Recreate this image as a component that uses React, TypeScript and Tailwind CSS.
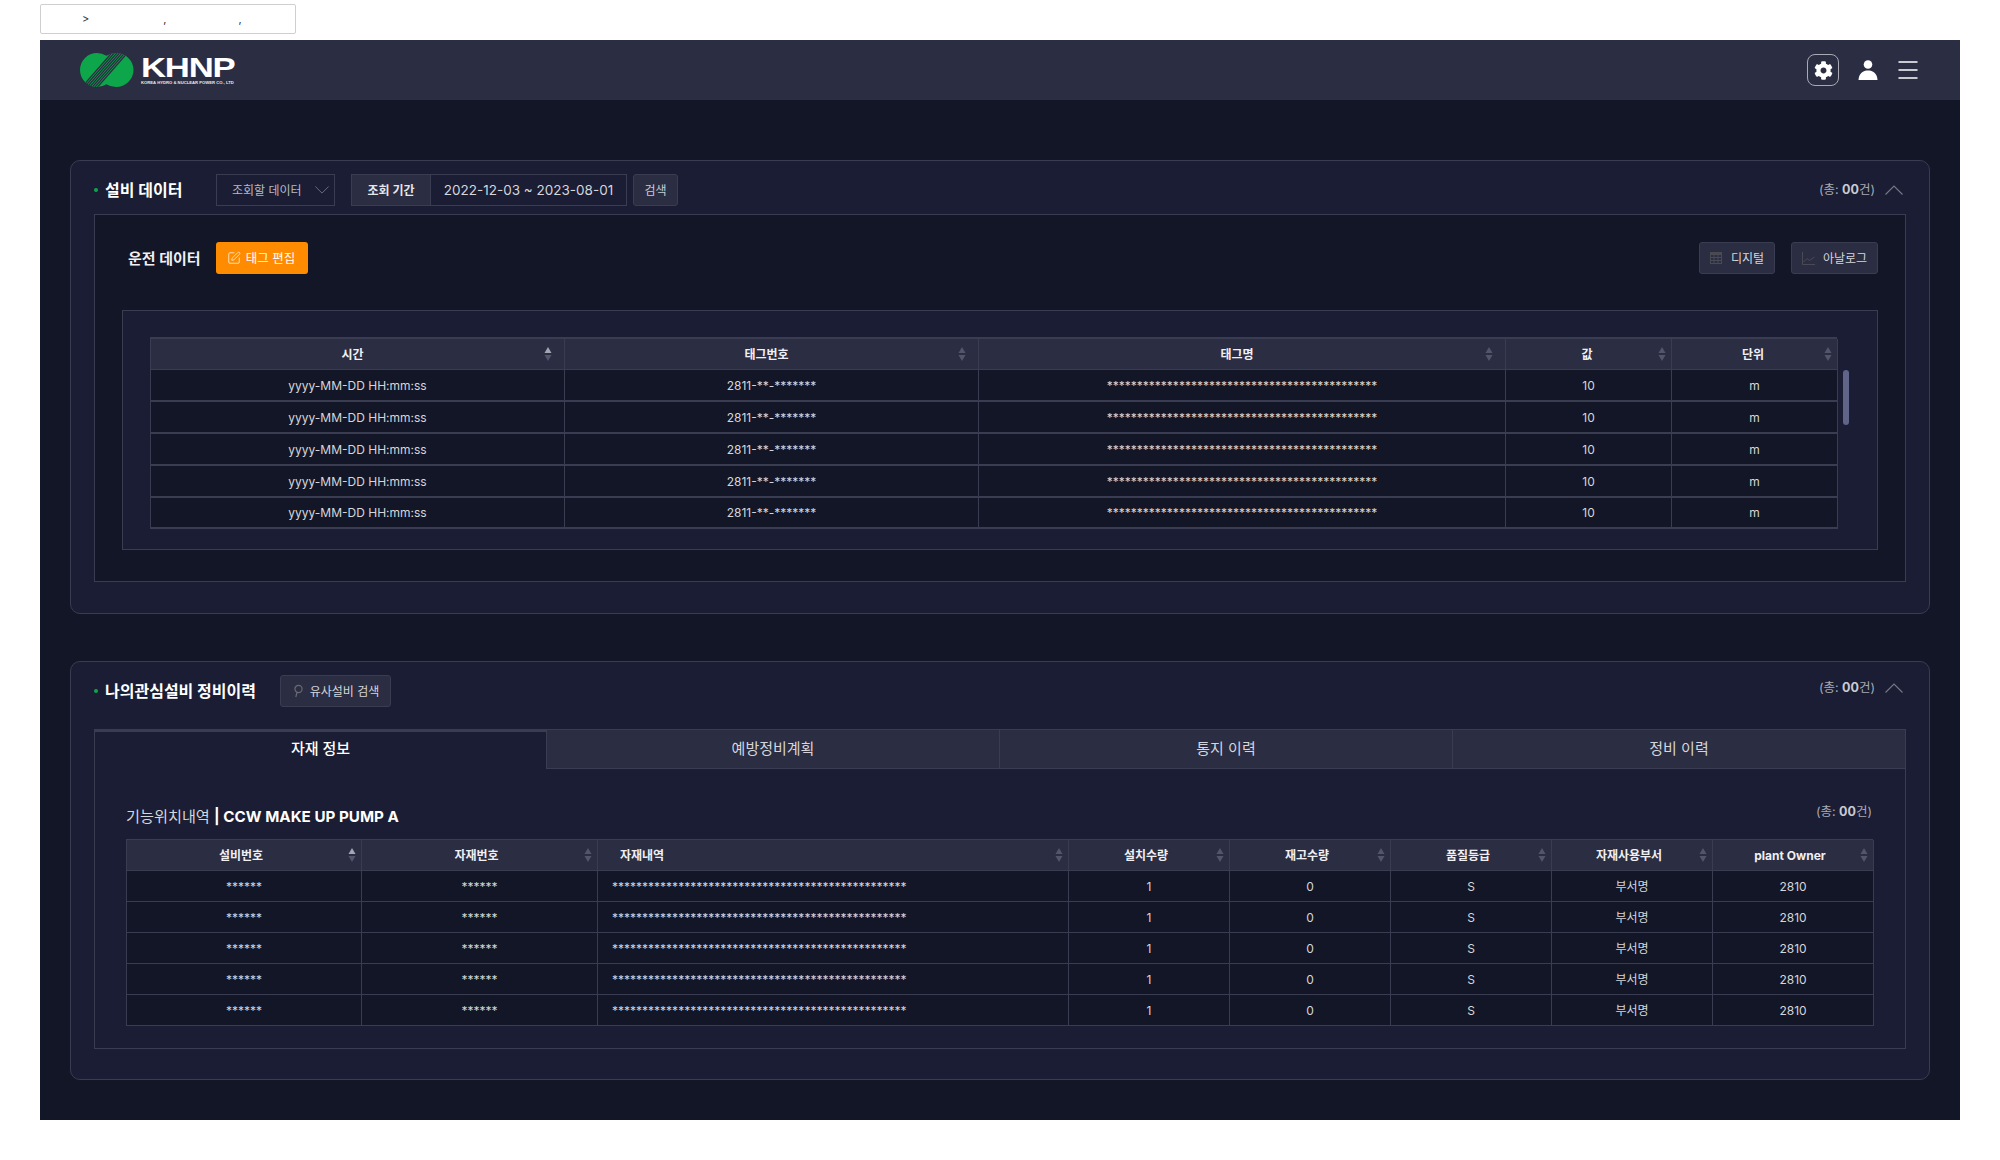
import { SquarePen } from "lucide-react";
import { FaCog } from "react-icons/fa";

const tagRows = [0, 1, 2, 3, 4];
const partRows = [0, 1, 2, 3, 4];
const TAG_STARS = "*".repeat(45);
const PART_STARS = "*".repeat(49);
const logoStripes = [0, 2.6, 5.2, 7.8, 10.4, 13, 15.6];

function SortIcon({ active = false, className = "right-[5px]" }: { active?: boolean; className?: string }) {
  return (
    <svg width="8" height="15" viewBox="0 0 8 15" className={`absolute top-1/2 -translate-y-1/2 ${className}`}>
      <path d="M4 0.5 L7.5 6.5 L0.5 6.5 Z" fill={active ? "#a3a5b3" : "#53556c"} />
      <path d="M4 14.5 L7.5 8.5 L0.5 8.5 Z" fill="#53556c" />
    </svg>
  );
}

function Chevron({ up = false, className = "" }: { up?: boolean; className?: string }) {
  return (
    <svg width="18" height="10" viewBox="0 0 18 10" fill="none" stroke="#77798a" strokeWidth="1.1" className={className}>
      <path d={up ? "M0.5 9.5 L9 1 L17.5 9.5" : "M0.5 0.5 L9 9 L17.5 0.5"} />
    </svg>
  );
}

function Total({ className = "" }: { className?: string }) {
  return (
    <span className={`text-[12.5px] text-[#a9aab4] ${className}`}>
      (총: <b className="font-bold text-[#c9cad2]">00</b>건)
    </span>
  );
}

function Logo() {
  return (
    <div className="flex items-start">
      <svg width="54" height="34" viewBox="0 0 54 34">
        <defs>
          <clipPath id="blob">
            <ellipse cx="17" cy="17" rx="17" ry="17" />
            <ellipse cx="36" cy="17" rx="17.5" ry="17" />
          </clipPath>
        </defs>
        <g clipPath="url(#blob)">
          <rect width="54" height="34" fill="#0ea64b" />
          {logoStripes.map((k) => (
            <path key={k} d={`M${k - 5} 42 L${k + 40} -9.5`} stroke="#2b2d42" strokeWidth="1.3" />
          ))}
        </g>
      </svg>
      <div className="ml-[7px] flex flex-col pt-[5px]">
        <span className="h-[20px] origin-left scale-x-[1.24] font-['Liberation_Sans',sans-serif] text-[28px] leading-[20px] font-bold tracking-[-1px] text-white">
          KHNP
        </span>
        <span className="mt-[2px] font-['Liberation_Sans',sans-serif] text-[4.2px] leading-[6px] font-bold whitespace-nowrap text-[#e8e8ec]">
          KOREA HYDRO &amp; NUCLEAR POWER CO., LTD
        </span>
      </div>
    </div>
  );
}

function TagTable() {
  const cols = [
    { label: "시간", pr: "pr-[10px]", icon: "right-[12px]" },
    { label: "태그번호", pr: "pr-[10px]", icon: "right-[12px]" },
    { label: "태그명", pr: "pr-[10px]", icon: "right-[12px]" },
    { label: "값", pr: "pr-[3px]", icon: "right-[5px]" },
    { label: "단위", pr: "pr-[3px]", icon: "right-[5px]" },
  ];
  return (
    <div className="w-[1687px] border-t-2 border-l border-[#3a3c52]">
      <div className="grid h-[31px] grid-cols-[414px_414px_527px_166px_166px] bg-[#2b2d42] text-[12px] font-bold text-[#f0f0f4]">
        {cols.map((c, i) => (
          <div key={c.label} className={`relative flex items-center justify-center border-r border-b border-[#3a3c52] pt-[1px] ${c.pr}`}>
            {c.label}
            <SortIcon active={i === 0} className={c.icon} />
          </div>
        ))}
      </div>
      {tagRows.map((r) => (
        <div
          key={r}
          className="grid h-[32px] grid-cols-[414px_414px_527px_166px_166px] bg-[#131627] text-[12px] text-[#d5d6db] last:h-[31px] [&>div]:flex [&>div]:items-center [&>div]:justify-center [&>div]:border-r [&>div]:border-b-2 [&>div]:border-[#3a3c52] [&>div]:pt-[1px]"
        >
          <div>yyyy-MM-DD HH:mm:ss</div>
          <div>2811-**-*******</div>
          <div>{TAG_STARS}</div>
          <div>10</div>
          <div>m</div>
        </div>
      ))}
    </div>
  );
}

function PartTable() {
  const cols = ["설비번호", "자재번호", "자재내역", "설치수량", "재고수량", "품질등급", "자재사용부서", "plant Owner"];
  return (
    <div className="w-[1747px] border-t border-l border-[#3a3c52]">
      <div className="grid h-[31px] grid-cols-[235px_236px_471px_161px_161px_161px_161px_161px] bg-[#2b2d42] text-[12px] font-bold text-[#f0f0f4]">
        {cols.map((c, i) =>
          i === 2 ? (
            <div key={c} className="relative flex items-center border-r border-b border-[#3a3c52] pt-[2px] pl-[22px]">
              {c}
              <SortIcon />
            </div>
          ) : (
            <div key={c} className="relative flex items-center justify-center border-r border-b border-[#3a3c52] pt-[2px] pr-[6px]">
              {c}
              <SortIcon active={i === 0} />
            </div>
          ),
        )}
      </div>
      {partRows.map((r) => (
        <div
          key={r}
          className="grid h-[31px] grid-cols-[235px_236px_471px_161px_161px_161px_161px_161px] bg-[#131627] text-[12px] text-[#d5d6db] [&>div]:flex [&>div]:items-center [&>div]:justify-center [&>div]:border-r [&>div]:border-b [&>div]:border-[#3a3c52] [&>div]:pt-[2px]"
        >
          <div>******</div>
          <div>******</div>
          <div className="!justify-start pl-[14px]">{PART_STARS}</div>
          <div>1</div>
          <div>0</div>
          <div>S</div>
          <div>부서명</div>
          <div>2810</div>
        </div>
      ))}
    </div>
  );
}

export default function App() {
  return (
    <div className="h-[1160px] w-[2000px] overflow-hidden bg-white pt-[4px] pl-[40px] font-['Inter','Noto_Sans_CJK_KR',sans-serif]">
      <div className="flex h-[30px] w-[256px] items-center rounded-[2px] border border-[#cfcfcf] bg-white text-[11px] text-[#333]">
        <span className="ml-[41px]">&gt;</span>
        <span className="ml-[74px]">,</span>
        <span className="ml-[72px]">,</span>
      </div>

      <div className="mt-[6px] h-[1080px] w-[1920px] bg-[#131627]">
        <header className="flex h-[60px] items-center justify-between bg-[#2b2d42] pr-[42px] pl-[40px]">
          <Logo />
          <div className="flex items-center">
            <div className="flex h-[32px] w-[32px] items-center justify-center rounded-[8px] border border-[#a9aab4]">
              <FaCog className="text-[19px] text-white" />
            </div>
            <svg width="20" height="20" viewBox="0 0 20 20" className="ml-[19px]">
              <circle cx="10" cy="4.5" r="4.3" fill="#fff" />
              <path d="M0.5 20 C1 13 5 10.5 10 10.5 C15 10.5 19 13 19.5 20 Z" fill="#fff" />
            </svg>
            <svg width="20" height="18" viewBox="0 0 20 18" className="ml-[20px]">
              <path d="M0.5 1 H19.5 M0.5 9 H19.5 M0.5 17 H19.5" stroke="#fff" strokeWidth="1.5" />
            </svg>
          </div>
        </header>

        <section className="mx-[30px] mt-[60px] h-[454px] rounded-[10px] border border-[#3a3c52] bg-[#1a1d33] px-[23px] pt-[13px]">
          <div className="flex h-[32px] items-center">
            <span className="h-[4px] w-[4px] rounded-full bg-[#0ea64b]" />
            <h2 className="ml-[7px] w-[111px] text-[16px] font-bold text-white">설비 데이터</h2>
            <div className="flex h-[32px] w-[119px] items-center justify-between border border-[#3a3c52] bg-[#1a1d33] pr-[5px] pl-[15px] text-[12px] text-[#b9bac4]">
              <span className="pt-[2px]">조회할 데이터</span>
              <Chevron className="w-[14px]" />
            </div>
            <div className="ml-[16px] flex h-[32px] w-[80px] items-center justify-center border border-[#3a3c52] bg-[#2b2d42] pt-[2px] text-[12px] font-bold text-[#e6e6ea]">
              조회 기간
            </div>
            <div className="flex h-[32px] w-[196px] items-center justify-center border border-l-0 border-[#3a3c52] bg-[#1a1d33] text-[13.5px] text-[#d5d6db]">
              2022-12-03 ~ 2023-08-01
            </div>
            <button className="ml-[6px] h-[32px] w-[45px] rounded-[3px] border border-[#3a3c52] bg-[#2b2d42] pt-[2px] text-[12px] text-[#c9cad2]">
              검색
            </button>
            <div className="ml-auto flex items-center pr-[3px]">
              <Total className="pt-[1px]" />
              <Chevron up className="ml-[10px]" />
            </div>
          </div>

          <div className="mt-[8px] h-[368px] border border-[#3a3c52] bg-[#131627] px-[27px] pt-[27px]">
            <div className="flex h-[32px] items-center pl-[6px]">
              <h3 className="w-[88px] pt-[2px] text-[15px] font-bold text-[#f0f0f4]">운전 데이터</h3>
              <button className="flex h-[32px] w-[92px] items-center justify-center gap-[5px] rounded-[3px] bg-[#ff8c00] pr-[2px] text-[12.5px] text-white">
                <SquarePen size={14} strokeWidth={1.2} />
                <span className="pt-[2px]">태그 편집</span>
              </button>
              <button className="ml-auto flex h-[32px] w-[76px] items-center justify-center gap-[9px] rounded-[3px] border border-[#3a3c52] bg-[#2b2d42] text-[12px] text-[#d5d6db]">
                <svg width="12" height="12" viewBox="0 0 12 12">
                  <path
                    d="M0 0 H12 V12 H0 Z M1 3 V5 H3.5 V3 Z M4.5 3 V5 H7.5 V3 Z M8.5 3 V5 H11 V3 Z M1 6 V8 H3.5 V6 Z M4.5 6 V8 H7.5 V6 Z M8.5 6 V8 H11 V6 Z M1 9 V11 H3.5 V9 Z M4.5 9 V11 H7.5 V9 Z M8.5 9 V11 H11 V9 Z"
                    fill="#4a4a52"
                    fillRule="evenodd"
                  />
                </svg>
                <span className="pt-[2px]">디지털</span>
              </button>
              <button className="ml-[16px] flex h-[32px] w-[87px] items-center justify-center gap-[8px] rounded-[3px] border border-[#3a3c52] bg-[#2b2d42] text-[12px] text-[#d5d6db]">
                <svg width="13" height="13" viewBox="0 0 13 13" fill="none" stroke="#4a4a52" strokeWidth="1">
                  <path d="M0.5 0 V12.5 H13 M1.5 10 L5 6.5 L7.5 8.5 L12.5 5" />
                </svg>
                <span className="pt-[2px]">아날로그</span>
              </button>
            </div>

            <div className="mt-[36px] flex h-[240px] w-[1756px] items-start gap-[6px] border border-[#3a3c52] bg-[#1a1d33] pt-[26px] pl-[27px]">
              <TagTable />
              <div className="mt-[33px] h-[55px] w-[6px] rounded-full bg-[#5f6488]" />
            </div>
          </div>
        </section>

        <section className="mx-[30px] mt-[47px] h-[419px] rounded-[10px] border border-[#3a3c52] bg-[#1a1d33] px-[23px] pt-[13px]">
          <div className="flex h-[32px] items-center">
            <span className="h-[4px] w-[4px] rounded-full bg-[#0ea64b]" />
            <h2 className="ml-[7px] w-[175px] text-[16px] font-bold text-white">나의관심설비 정비이력</h2>
            <button className="flex h-[32px] w-[111px] items-center justify-center gap-[7px] rounded-[3px] border border-[#3a3c52] bg-[#2b2d42] pl-[1px] text-[12px] text-[#d5d6db]">
              <svg width="10" height="14" viewBox="0 0 10 14" fill="none" stroke="#6a6a70" strokeWidth="1.2">
                <circle cx="5.5" cy="5" r="3.6" />
                <path d="M4 8.5 L2.8 13" />
              </svg>
              <span className="pt-[2px]">유사설비 검색</span>
            </button>
            <div className="ml-auto -mt-[6px] flex items-center pr-[3px]">
              <Total className="pt-[1px]" />
              <Chevron up className="ml-[10px]" />
            </div>
          </div>

          <div className="mt-[22px] grid h-[40px] grid-cols-4 text-[15px]">
            <div className="flex items-center justify-center border-x border-t-[3px] border-[#3a3c52] pb-[2px] font-medium text-white">자재 정보</div>
            <div className="flex items-center justify-center border-t border-r border-b border-[#3a3c52] bg-[#2b2d42] text-[#d5d6db]">예방정비계획</div>
            <div className="flex items-center justify-center border-t border-r border-b border-[#3a3c52] bg-[#2b2d42] text-[#d5d6db]">통지 이력</div>
            <div className="flex items-center justify-center border-t border-r border-b border-[#3a3c52] bg-[#2b2d42] text-[#d5d6db]">정비 이력</div>
          </div>

          <div className="h-[280px] border-x border-b border-[#3a3c52] px-[31px] pt-[35px]">
            <div className="flex h-[24px] items-center justify-between pr-[2px]">
              <p className="pt-[2px] text-[15.2px] text-[#d5d6db]">
                기능위치내역 <b className="font-bold text-white">| CCW MAKE UP PUMP A</b>
              </p>
              <Total className="-mt-[8px]" />
            </div>
            <div className="mt-[11px]">
              <PartTable />
            </div>
          </div>
        </section>
      </div>
    </div>
  );
}
